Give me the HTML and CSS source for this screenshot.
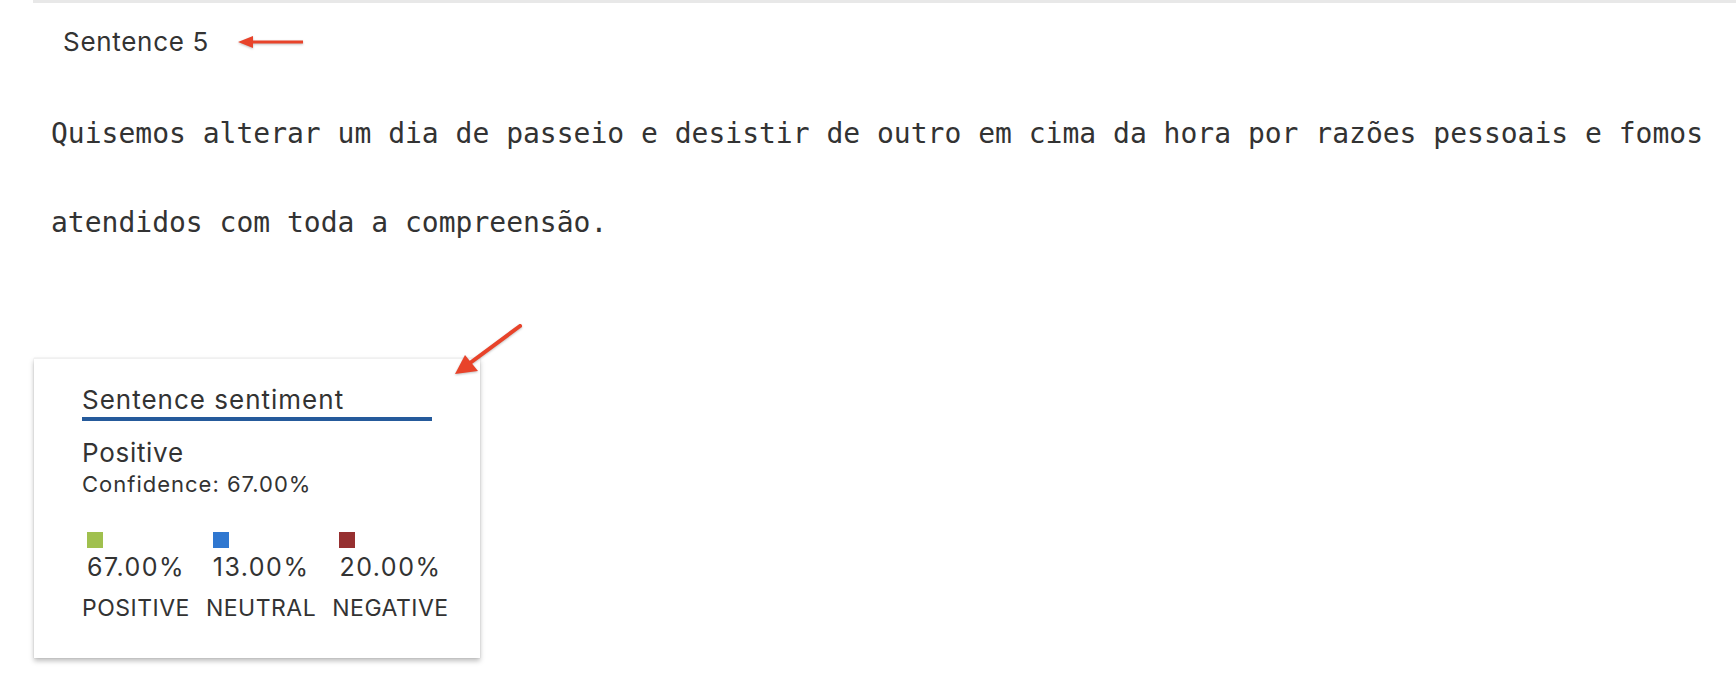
FILE: index.html
```html
<!DOCTYPE html>
<html lang="pt">
<head>
<meta charset="utf-8">
<title>Sentence 5</title>
<link rel="stylesheet" href="styles.css">
</head>
<body>
<div class="page">
  <div class="rule"></div>
  <div class="sentence-label">
    <span>Sentence 5</span>
    <svg class="arrow-left" width="68" height="16" viewBox="0 0 68 16">
      <line x1="14" y1="8" x2="66" y2="8" stroke="#e8432a" stroke-width="3"/>
      <polygon points="1,8 16,2 16,14" fill="#e8432a"/>
    </svg>
  </div>
  <p class="sentence-text">Quisemos alterar um dia de passeio e desistir de outro em cima da hora por razões pessoais e fomos atendidos com toda a compreensão.</p>
  <div class="card-wrap">
    <svg class="arrow-diag" width="76" height="62" viewBox="0 0 76 62">
      <line x1="70" y1="6" x2="20" y2="43" stroke="#e8432a" stroke-width="4" stroke-linecap="round"/>
      <polygon points="5,54 15,35 28,51" fill="#e8432a"/>
    </svg>
    <div class="card">
      <h3 class="card-title">Sentence sentiment</h3>
      <div class="card-label">Positive</div>
      <div class="card-confidence">Confidence: 67.00%</div>
      <div class="scores">
        <div class="score">
          <div class="score-top"><span class="swatch swatch-pos"></span><span class="pct">67.00%</span></div>
          <div class="score-name">POSITIVE</div>
        </div>
        <div class="score">
          <div class="score-top"><span class="swatch swatch-neu"></span><span class="pct">13.00%</span></div>
          <div class="score-name">NEUTRAL</div>
        </div>
        <div class="score">
          <div class="score-top"><span class="swatch swatch-neg"></span><span class="pct">20.00%</span></div>
          <div class="score-name">NEGATIVE</div>
        </div>
      </div>
    </div>
  </div>
</div>
</body>
</html>
```
FILE: styles.css
```css
html, body {
  margin: 0;
  padding: 0;
  background: #ffffff;
}

body {
  font-family: Inter, "Noto Sans", "Liberation Sans", sans-serif;
  color: #333333;
}

.page {
  padding-bottom: 26px;
}

.rule {
  margin-left: 33px;
  height: 3px;
  background: #e8e8e8;
}

.sentence-label {
  display: flex;
  align-items: center;
  gap: 28px;
  margin-top: 24px;
  padding-left: 63px;
  font-size: 26px;
  line-height: 30px;
  letter-spacing: 0.7px;
}

.arrow-left {
  display: block;
  filter: drop-shadow(0 1px 1px rgba(0, 0, 0, 0.25));
}

.sentence-text {
  margin: 32px 0 0;
  padding: 0 20px 0 51px;
  font-family: "DejaVu Sans Mono", "Liberation Mono", monospace;
  font-size: 28px;
  line-height: 89px;
  color: #333333;
}

.card-wrap {
  position: relative;
  margin: 91px 0 0 34px;
  width: 446px;
}

.arrow-diag {
  position: absolute;
  left: 416px;
  top: -38px;
  filter: drop-shadow(0 1px 1px rgba(0, 0, 0, 0.25));
}

.card {
  box-sizing: border-box;
  height: 300px;
  padding: 26px 48px 0;
  background: #ffffff;
  border-top: 1px solid #f0f0f0;
  box-shadow: 0 3px 5px rgba(0, 0, 0, 0.26), 0 0 1px rgba(0, 0, 0, 0.16);
}

.card-title {
  margin: 0;
  padding-bottom: 2px;
  font-size: 26px;
  font-weight: 400;
  line-height: 30px;
  letter-spacing: 1px;
  border-bottom: 4px solid #255a9b;
}

.card-label {
  margin-top: 17px;
  font-size: 26px;
  line-height: 30px;
  letter-spacing: 0.7px;
}

.card-confidence {
  margin-top: 3px;
  font-size: 22px;
  line-height: 26px;
  letter-spacing: 1px;
}

.scores {
  display: flex;
  gap: 16px;
  margin-top: 35px;
  white-space: nowrap;
}

.score {
  display: flex;
  flex-direction: column;
  align-items: center;
}

.score-top {
  display: flex;
  flex-direction: column;
  align-items: flex-start;
}

.swatch {
  display: block;
  width: 16px;
  height: 16px;
  margin-bottom: 4px;
}

.swatch-pos { background: #a0c04e; }
.swatch-neu { background: #2f77d0; }
.swatch-neg { background: #962f30; }

.pct {
  font-size: 25px;
  line-height: 30px;
  letter-spacing: 1.5px;
}

.score-name {
  margin-top: 12px;
  font-size: 23px;
  line-height: 28px;
  letter-spacing: 0.5px;
}
```
